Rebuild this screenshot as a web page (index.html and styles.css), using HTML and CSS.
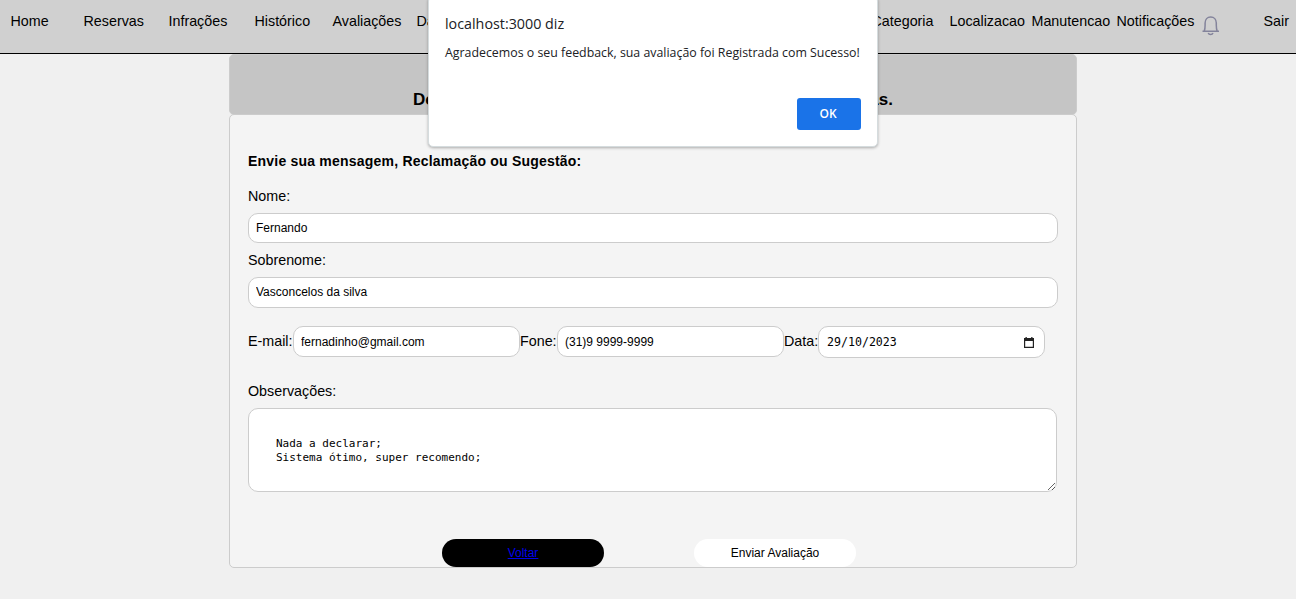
FILE: index.html
```html
<!DOCTYPE html>
<html lang="pt-BR">
<head>
<meta charset="utf-8">
<title>Avaliações</title>
<link rel="stylesheet" href="styles.css">
</head>
<body>
<nav class="nav">
  <a>Home</a><a>Reservas</a><a>Infrações</a><a>Histórico</a><a>Avaliações</a><a>Da</a><a>Categoria</a><a>Localizacao</a><a>Manutencao</a><a>Notificações</a>
  <svg class="bell" width="18" height="20" viewBox="0 0 18 20" fill="none" stroke="#83839b" stroke-width="1.5"><path d="M.5 15.200h16.500M2.300 15c.6-1.700.8-3.100.8-5.700V7C3.100 3.500 5.300 1 8.700 1s5.600 2.500 5.600 6v2.300c0 2.600.2 4 .8 5.700"/><path d="M6.200 17c.4 1 1.200 1.500 2.400 1.500s2-.5 2.400-1.500"/></svg>
  <a>Sair</a>
</nav>
<main class="page">
  <header class="banner"><span>De</span><span>as.</span></header>
  <form class="card">
    <h2 class="heading">Envie sua mensagem, Reclamação ou Sugestão:</h2>
    <label class="label">Nome:</label>
    <input class="field wide" value="Fernando">
    <label class="label second">Sobrenome:</label>
    <input class="field wide tall" value="Vasconcelos da silva">
    <div class="row">
      <label class="l-mail">E-mail:</label><input class="field" value="fernadinho@gmail.com">
      <label class="l-fone">Fone:</label><input class="field" value="(31)9 9999-9999">
      <label class="l-data">Data:</label>
      <div class="field date"><span>29/10/2023</span>
        <svg width="10" height="11" viewBox="0 0 10 11"><path d="M0 1h10v10H0zM1.200 4v5.800h7.600V4z" fill="#222" fill-rule="evenodd"/><path d="M1.500 0h1.300v2H1.500zM7.200 0h1.300v2H7.200z" fill="#222"/></svg>
      </div>
    </div>
    <label class="label obs">Observações:</label>
    <textarea class="area">Nada a declarar;
Sistema ótimo, super recomendo;</textarea>
    <div class="actions">
      <button type="button" class="btn back"><a href="#">Voltar</a></button>
      <button type="button" class="btn send">Enviar Avaliação</button>
    </div>
  </form>
</main>
<section class="dialog">
  <h1 class="dialog-title">localhost:3000 diz</h1>
  <p class="dialog-text">Agradecemos o seu feedback, sua avaliação foi Registrada com Sucesso!</p>
  <button type="button" class="ok">OK</button>
</section>
</body>
</html>
```

FILE: styles.css
```css
* { box-sizing: border-box; }
body {
  margin: 0;
  height: 599px;
  overflow: hidden;
  background: #f0f0f0;
  color: #000;
  font: 14.3px/18px "Liberation Sans", Arial, sans-serif;
}
.nav {
  display: grid;
  grid-template-columns: 73px 85px 86px 78px 84px 455px 78px 82px 85px 85px 62px auto;
  height: 54px;
  padding: 12px 0 0 10.5px;
  background: #d0d0d0;
  border-bottom: 1px solid #000;
  white-space: nowrap;
}
.bell { margin-top: 4px; }
.page { width: 848px; margin-left: 229px; }
.banner {
  display: flex;
  justify-content: space-between;
  height: 61px;
  padding: 35px 183px 0 183px;
  border: 1px solid #ccc;
  border-radius: 5px;
  background: #c5c5c5;
  font-size: 17px;
  line-height: 20px;
  font-weight: bold;
}
.card {
  height: 454px;
  margin-top: -1px;
  padding: 37px 18px 0;
  border: 1px solid #ccc;
  border-radius: 5px;
  background: #f4f4f4;
}
.heading {
  margin: 0 0 17px;
  font-size: 14px;
  line-height: 18px;
  letter-spacing: 0.21px;
}
.label { display: block; }
.second { margin-top: 8px; }
.obs { margin-top: 24px; }
.field {
  width: 227px;
  height: 31px;
  padding: 0 7px;
  border: 1px solid #ccc;
  border-radius: 10px;
  background: #fff;
  font: 12px "Liberation Sans", Arial, sans-serif;
  color: #000;
}
.wide { display: block; width: 810px; height: 30px; margin-top: 8px; }
.tall { height: 31px; padding-bottom: 1px; }
.row {
  display: flex;
  align-items: flex-start;
  margin-top: 18px;
  white-space: nowrap;
}
.row label { line-height: 30px; }
.l-mail { width: 45px; }
.l-fone { width: 37px; }
.l-data { width: 34px; }
.date {
  display: flex;
  align-items: center;
  justify-content: space-between;
  height: 32px;
  padding: 0 10px 0 8px;
  font: 11.6px "DejaVu Sans Mono", monospace;
}
.area {
  display: block;
  width: 809px;
  height: 84px;
  margin-top: 8px;
  padding: 28px 27px;
  border: 1px solid #ccc;
  border-radius: 10px;
  background: #fff;
  color: #000;
  font: 11px/14px "DejaVu Sans Mono", monospace;
  overflow: hidden;
  resize: both;
}
.actions {
  display: flex;
  gap: 90px;
  margin: 47px 0 0 194px;
}
.btn {
  width: 162px;
  height: 28px;
  padding: 0;
  border: 0;
  border-radius: 14px;
  font: 12px "Liberation Sans", Arial, sans-serif;
  color: #000;
}
.back { background: #000; }
.back a { color: #00e; text-decoration: underline; }
.send { background: #fff; }
.dialog {
  position: absolute;
  top: -4px;
  left: 428px;
  width: 450px;
  height: 151px;
  padding: 17px 17px 0;
  border: 1px solid #d5dcde;
  border-radius: 5px;
  background: #fff;
  box-shadow: 0 1px 3px rgba(0, 0, 0, .3);
  color: #202124;
  font-family: "Open Sans", "Noto Sans", sans-serif;
  white-space: nowrap;
}
.dialog-title { margin: 0 0 10px -1px; font-size: 14.3px; line-height: 20px; font-weight: 400; }
.dialog-text { margin: 0 0 0 -1px; font-size: 12.36px; line-height: 18px; }
.ok {
  display: block;
  width: 64px;
  height: 32px;
  margin: 36px -1px 0 auto;
  padding: 0 8px 1px 6px;
  border: 0;
  border-radius: 3px;
  background: #1a73e8;
  color: #fff;
  font: 600 12px "Open Sans", "Noto Sans", sans-serif;
}
```
